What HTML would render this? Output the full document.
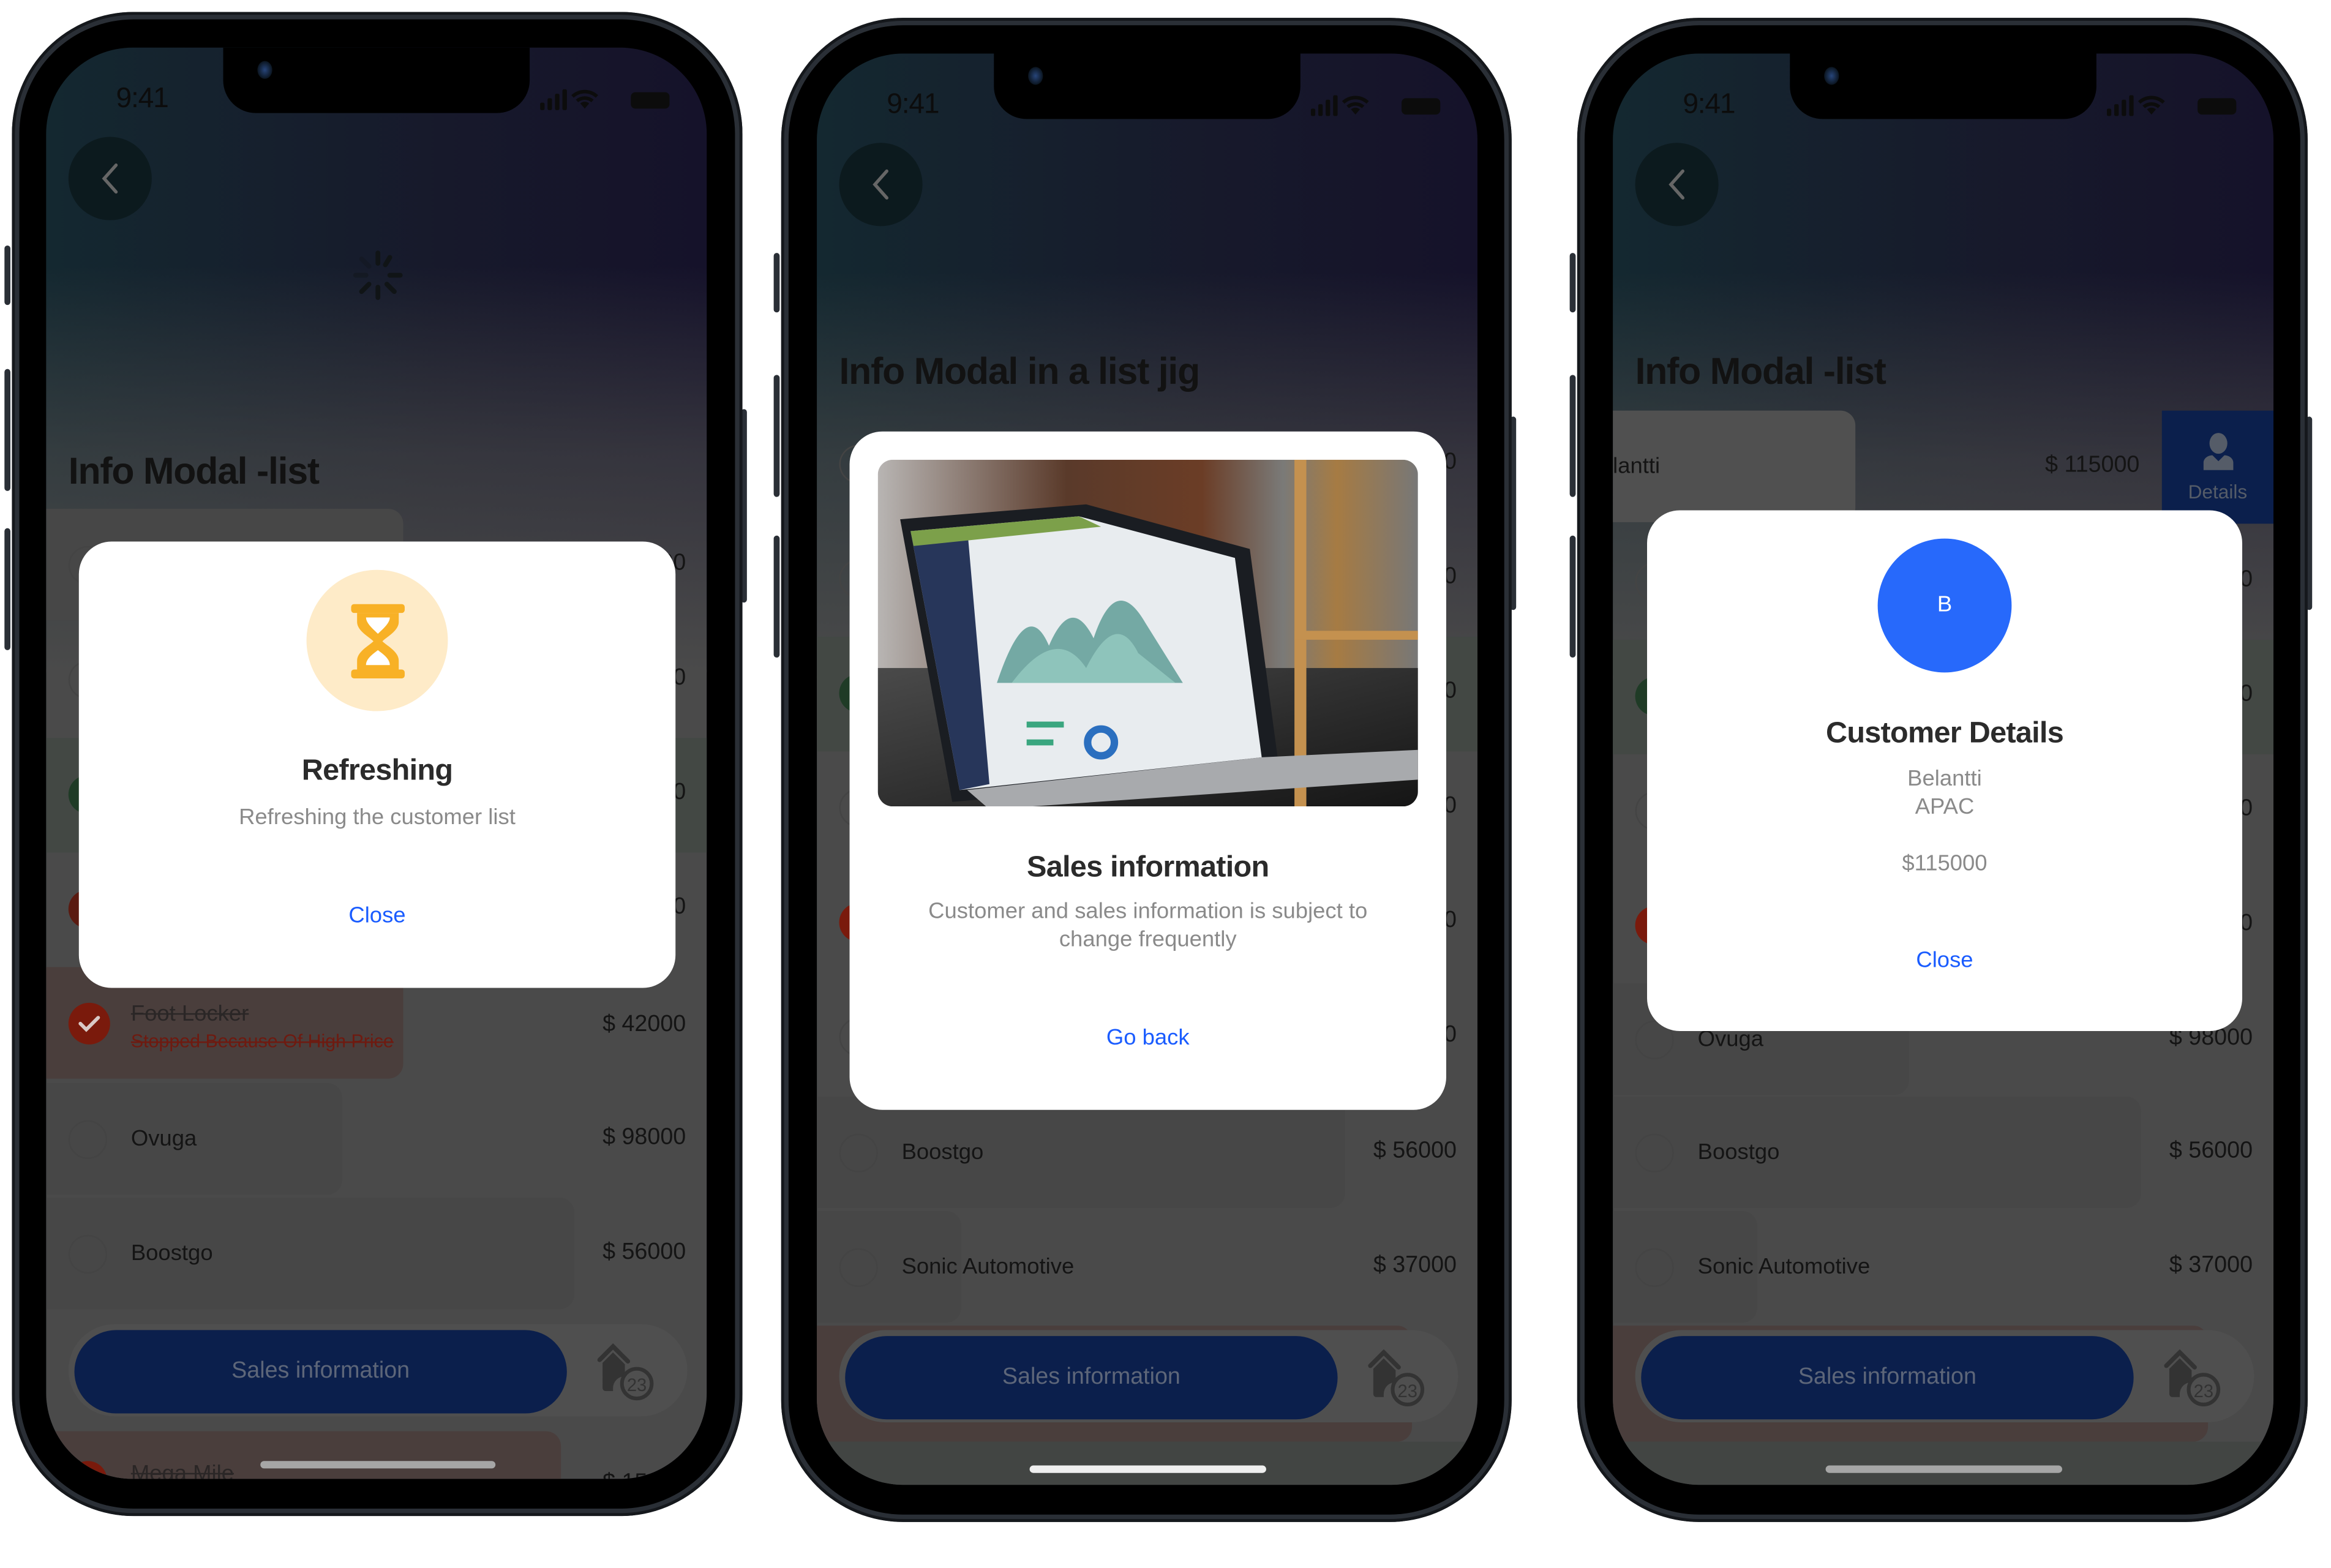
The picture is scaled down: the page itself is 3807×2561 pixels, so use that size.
<!DOCTYPE html>
<html><head><meta charset="utf-8">
<style>
html,body{margin:0;padding:0;background:#fff;overflow:hidden}
body{width:3807px;height:2561px;position:relative}
#w{position:absolute;left:0;top:0;width:1570px;height:1060px;transform:scale(2.43);transform-origin:0 0;font-family:"Liberation Sans",sans-serif}
.ph{position:absolute;width:491px;height:1011px;border-radius:82px;background:#2a2f36;box-shadow:inset 0 0 0 2px #15181c}
.bz{position:absolute;left:5px;top:5px;right:5px;bottom:5px;border-radius:77px;background:#000}
.btn{position:absolute;width:4px;background:#2a2f36;border-radius:2px}
.sc{position:absolute;left:24px;top:24px;width:444px;height:962px;border-radius:58px;overflow:hidden;
background:linear-gradient(90deg,#142830,#17192b 60%,#15122a);}
.grad{position:absolute;left:0;top:0;width:100%;height:420px;background:linear-gradient(180deg,rgba(74,74,74,0) 0,rgba(74,74,74,0) 35%,rgba(74,74,74,.6) 65%,#4a4a4a 100%)}
.bg{position:absolute;left:0;top:418px;width:100%;height:600px;background:#4a4a4a}
.notch{position:absolute;left:119px;top:0;width:206px;height:44px;background:#000;border-radius:0 0 22px 22px}
.cam{position:absolute;left:142px;top:9px;width:10px;height:12px;border-radius:50%;background:radial-gradient(#27457a,#0b1520 70%)}
.time{position:absolute;left:47px;top:24px;font-size:19px;color:#0c0c0c;letter-spacing:-.5px}
.back{position:absolute;left:15px;top:60px;width:56px;height:56px;border-radius:50%;background:#0c1a1e}
.title{position:absolute;left:15px;font-size:25px;font-weight:bold;color:#121212;letter-spacing:-.5px;white-space:nowrap}
.row{position:absolute;left:0;width:444px;height:77px}
.rb{position:absolute;top:0;height:75px;border-radius:0 10px 10px 0;background:#474747}
.cir{position:absolute;left:15px;width:26px;height:26px;border-radius:50%;border:1.5px solid #444;box-sizing:border-box}
.nm{position:absolute;left:57px;font-size:15px;color:#141414;white-space:nowrap}
.pr{position:absolute;right:14px;font-size:15.5px;color:#141414;white-space:nowrap}
.pill{position:absolute;left:15px;top:858px;width:416px;height:62px;border-radius:31px;background:#4f4f4f}
.sb{position:absolute;left:4px;top:4px;width:331px;height:56px;border-radius:28px;background:#0b1f4c;color:#5d6679;font-size:15.5px;text-align:center;line-height:56px}
.modal{position:absolute;background:#fff;border-radius:22px;text-align:center}
.mt{position:absolute;left:0;right:0;font-size:20px;font-weight:bold;color:#2b2b2b;letter-spacing:-.3px}
.ms{position:absolute;left:0;right:0;font-size:15px;color:#8a8a8a;line-height:19px}
.ml{position:absolute;left:0;right:0;font-size:15px;color:#1a5cff}
.hb{position:absolute;left:144px;top:946px;width:158px;height:5px;border-radius:3px}
</style></head><body><div id="w">

<!-- PHONE 1 -->
<div class="btn" style="left:3px;top:165px;height:40px"></div>
<div class="btn" style="left:3px;top:248px;height:82px"></div>
<div class="btn" style="left:3px;top:355px;height:82px"></div>
<div class="btn" style="left:498px;top:275px;height:130px"></div>
<div class="ph" style="left:8px;top:8px"><div class="bz"></div>
<div class="sc" style="left:23px;top:24px">
 <div class="grad"></div><div class="bg"></div>
 <div class="notch"></div><div class="cam"></div>
 <div class="time">9:41</div>
 <svg style="position:absolute;left:332px;top:27px" width="90" height="16" viewBox="0 0 90 16"><g fill="#0c0c0c"><rect x="0" y="10" width="3" height="5" rx="1"/><rect x="5" y="7" width="3" height="8" rx="1"/><rect x="10" y="4" width="3" height="11" rx="1"/><rect x="15" y="1" width="3" height="14" rx="1"/><path d="M30 14l3-3.5a4.5 4.5 0 0 0-6 0z M24 8a9 9 0 0 1 12 0l-1.6 1.7a6.7 6.7 0 0 0-8.8 0z M21 5a13 13 0 0 1 18 0l-1.6 1.7a10.8 10.8 0 0 0-14.8 0z"/><rect x="61" y="3" width="26" height="11" rx="3"/></g></svg>
 <div class="back"><svg width="56" height="56"><path d="M32 19l-8 9 8 9" stroke="#666" stroke-width="2.2" fill="none" stroke-linecap="round"/></svg></div>
 <svg style="position:absolute;left:206px;top:136px" width="34" height="34" viewBox="-17 -17 34 34"><g stroke="#101416" stroke-width="3.2" stroke-linecap="round"><line x1="0" y1="-15" x2="0" y2="-8"/><line x1="8" y1="-12" x2="5" y2="-7"/><line x1="15" y1="0" x2="8" y2="0"/><line x1="11" y1="11" x2="6" y2="6"/><line x1="0" y1="15" x2="0" y2="8"/><line x1="-11" y1="11" x2="-6" y2="6"/><line x1="-15" y1="0" x2="-8" y2="0" opacity=".4"/><line x1="-11" y1="-11" x2="-6" y2="-6" opacity=".3"/></g></svg>
 <div class="title" style="top:271px">Info Modal -list</div>
 <div class="row" style="top:310px"><div class="rb" style="width:240px"></div><div class="cir" style="top:25px"></div><div class="pr" style="top:28px">$ 115000</div></div>
 <div class="row" style="top:387px"><div class="cir" style="top:25px"></div><div class="pr" style="top:28px">$ 32000</div></div>
 <div class="row" style="top:464px;background:#434844"><div class="cir" style="top:25px;background:#1f3b26;border:none"></div><div class="pr" style="top:28px">$ 71000</div></div>
 <div class="row" style="top:541px"><div class="cir" style="top:25px;background:#5a1a10;border:none"></div><div class="pr" style="top:28px">$ 60000</div></div>
 <div class="row" style="top:618px"><div class="rb" style="width:240px;background:#4a3e3c"></div>
  <div class="cir" style="top:24px;width:28px;height:28px;background:#7a1a0c;border:none"><svg width="28" height="28"><path d="M8 14l4 4 8-8" stroke="#d9c9c6" stroke-width="2.4" fill="none" stroke-linecap="round"/></svg></div>
  <div class="nm" style="top:23px;color:#2a2626;text-decoration:line-through">Foot Locker</div>
  <div class="nm" style="top:43px;font-size:12.5px;color:#6e1a10;text-decoration:line-through">Stopped Because Of High Price</div>
  <div class="pr" style="top:30px">$ 42000</div></div>
 <div class="row" style="top:696px"><div class="rb" style="width:199px"></div><div class="cir" style="top:25px"></div><div class="nm" style="top:29px">Ovuga</div><div class="pr" style="top:28px">$ 98000</div></div>
 <div class="row" style="top:773px"><div class="rb" style="width:355px"></div><div class="cir" style="top:25px"></div><div class="nm" style="top:29px">Boostgo</div><div class="pr" style="top:28px">$ 56000</div></div>
 <div class="row" style="top:930px"><div class="rb" style="width:346px;background:#4a3e3c"></div><div class="cir" style="top:20px;background:#7a1a0c;border:none"></div><div class="nm" style="top:20px;color:#2a2626;text-decoration:line-through">Mega Mile</div><div class="pr" style="top:26px">$ 15400</div></div>
 <div class="pill"><div class="sb">Sales information</div>
  <svg style="position:absolute;left:355px;top:12px" width="42" height="42" viewBox="0 0 42 42"><path d="M2 12L11 3l10 10" stroke="#333" stroke-width="3" fill="none" stroke-linecap="round"/><path d="M4 14l7-7 8 8v8a8 8 0 0 0-8 8v2H6a2 2 0 0 1-2-2z" fill="#333"/><circle cx="27" cy="28" r="10" stroke="#333" stroke-width="2.5" fill="none"/><text x="27" y="33" font-size="12" fill="#333" text-anchor="middle" font-family="Liberation Sans">23</text></svg></div>
 <div class="hb" style="background:#a6a6a6;top:950px"></div>
 <div class="modal" style="left:22px;top:332px;width:401px;height:300px">
  <div style="position:absolute;left:153px;top:19px;width:95px;height:95px;border-radius:50%;background:#feebc8"></div>
  <svg style="position:absolute;left:182px;top:42px" width="38" height="50" viewBox="0 0 38 50"><g fill="#f8b126"><rect x="1" y="0" width="36" height="6" rx="2"/><rect x="1" y="44" width="36" height="6" rx="2"/><path d="M5 6h28v6c0 6-8 10-11 13 3 3 11 7 11 13v6H5v-6c0-6 8-10 11-13C13 22 5 18 5 12z"/></g><path d="M11 9h16c0 4-5 8-8 11-3-3-8-7-8-11zM19 31c-4 3-8 6-8 10h16c0-4-4-7-8-10z" fill="#fff"/></svg>
  <div class="mt" style="top:143px">Refreshing</div>
  <div class="ms" style="top:176px">Refreshing the customer list</div>
  <div class="ml" style="top:243px">Close</div>
 </div>
</div></div>

<!-- PHONE 2 -->
<div class="btn" style="left:520px;top:170px;height:40px"></div>
<div class="btn" style="left:520px;top:252px;height:82px"></div>
<div class="btn" style="left:520px;top:360px;height:82px"></div>
<div class="btn" style="left:1015px;top:280px;height:130px"></div>
<div class="ph" style="left:525px;top:12px"><div class="bz"></div>
<div class="sc">
 <div class="grad"></div><div class="bg"></div>
 <div class="notch"></div><div class="cam"></div>
 <div class="time">9:41</div>
 <svg style="position:absolute;left:332px;top:27px" width="90" height="16" viewBox="0 0 90 16"><g fill="#0c0c0c"><rect x="0" y="10" width="3" height="5" rx="1"/><rect x="5" y="7" width="3" height="8" rx="1"/><rect x="10" y="4" width="3" height="11" rx="1"/><rect x="15" y="1" width="3" height="14" rx="1"/><path d="M30 14l3-3.5a4.5 4.5 0 0 0-6 0z M24 8a9 9 0 0 1 12 0l-1.6 1.7a6.7 6.7 0 0 0-8.8 0z M21 5a13 13 0 0 1 18 0l-1.6 1.7a10.8 10.8 0 0 0-14.8 0z"/><rect x="61" y="3" width="26" height="11" rx="3"/></g></svg>
 <div class="back"><svg width="56" height="56"><path d="M32 19l-8 9 8 9" stroke="#666" stroke-width="2.2" fill="none" stroke-linecap="round"/></svg></div>
 <div class="title" style="top:200px">Info Modal in a list jig</div>
 <div class="row" style="top:238px"><div class="cir" style="top:25px"></div><div class="pr" style="top:28px">$ 115000</div></div>
 <div class="row" style="top:315px"><div class="cir" style="top:25px"></div><div class="pr" style="top:28px">$ 32000</div></div>
 <div class="row" style="top:392px;background:#434844"><div class="cir" style="top:25px;background:#1f3b26;border:none"></div><div class="pr" style="top:28px">$ 71000</div></div>
 <div class="row" style="top:469px"><div class="cir" style="top:25px"></div><div class="pr" style="top:28px">$ 60000</div></div>
 <div class="row" style="top:546px"><div class="cir" style="top:25px;background:#7a1a0c;border:none"></div><div class="pr" style="top:28px">$ 42000</div></div>
 <div class="row" style="top:623px"><div class="cir" style="top:25px"></div><div class="pr" style="top:28px">$ 98000</div></div>
 <div class="row" style="top:701px"><div class="rb" style="width:355px"></div><div class="cir" style="top:25px"></div><div class="nm" style="top:29px">Boostgo</div><div class="pr" style="top:28px">$ 56000</div></div>
 <div class="row" style="top:778px"><div class="rb" style="width:97px"></div><div class="cir" style="top:25px"></div><div class="nm" style="top:29px">Sonic Automotive</div><div class="pr" style="top:28px">$ 37000</div></div>
 <div class="row" style="top:855px"><div class="rb" style="width:400px;background:#4a3e3c;height:78px"></div></div>
 <div style="position:absolute;left:0;top:933px;width:444px;height:40px;background:#424543"></div>
 <div class="pill"><div class="sb">Sales information</div>
  <svg style="position:absolute;left:355px;top:12px" width="42" height="42" viewBox="0 0 42 42"><path d="M2 12L11 3l10 10" stroke="#333" stroke-width="3" fill="none" stroke-linecap="round"/><path d="M4 14l7-7 8 8v8a8 8 0 0 0-8 8v2H6a2 2 0 0 1-2-2z" fill="#333"/><circle cx="27" cy="28" r="10" stroke="#333" stroke-width="2.5" fill="none"/><text x="27" y="33" font-size="12" fill="#333" text-anchor="middle" font-family="Liberation Sans">23</text></svg></div>
 <div class="hb" style="background:#efefef;top:949px;left:143px;width:159px"></div>
 <div class="modal" style="left:22px;top:254px;width:401px;height:456px">
  <svg style="position:absolute;left:19px;top:19px;border-radius:10px" width="363" height="233" viewBox="0 0 363 233">
   <defs><linearGradient id="bgp" x1="0" x2="1"><stop offset="0" stop-color="#b8b5b3"/><stop offset=".35" stop-color="#5a3a2a"/><stop offset=".6" stop-color="#6b3d26"/><stop offset=".75" stop-color="#7a7a78"/><stop offset=".85" stop-color="#a67b43"/><stop offset="1" stop-color="#777"/></linearGradient>
   <linearGradient id="tb" y1="0" y2="1"><stop offset="0" stop-color="#4a4a4a"/><stop offset="1" stop-color="#151515"/></linearGradient></defs>
   <rect width="363" height="233" fill="url(#bgp)"/>
   <rect x="0" y="140" width="363" height="93" fill="url(#tb)"/>
   <rect x="280" y="0" width="8" height="233" fill="#c4914f"/><rect x="280" y="115" width="83" height="6" fill="#c4914f"/>
   <path d="M15 40 L140 30 L250 60 L270 210 L50 230 Z" fill="#1a1d22"/>
   <path d="M22 48 L135 38 L240 66 L258 200 L55 222 Z" fill="#e8ecef"/>
   <path d="M22 48 L60 45 L75 218 L55 222 Z" fill="#27365a"/>
   <path d="M22 48 L135 38 L150 45 L24 58 Z" fill="#7ca04a"/>
   <path d="M80 150 Q100 90 115 125 Q130 90 145 120 Q160 75 180 110 L205 150 Z" fill="#5f9e96" opacity=".85"/>
   <path d="M90 150 Q120 110 140 140 Q160 100 175 130 L200 150 Z" fill="#9ad0c4" opacity=".7"/>
   <circle cx="150" cy="190" r="9" fill="none" stroke="#2b6fbf" stroke-width="5"/>
   <rect x="100" y="176" width="25" height="4" fill="#3aa67f"/><rect x="100" y="188" width="18" height="4" fill="#3aa67f"/>
   <path d="M60 222 L258 200 L363 195 L363 215 L75 235 Z" fill="#a8aaad"/>
  </svg>
  <div class="mt" style="top:282px">Sales information</div>
  <div class="ms" style="top:313px;padding:0 30px">Customer and sales information is subject to change frequently</div>
  <div class="ml" style="top:399px">Go back</div>
 </div>
</div></div>

<!-- PHONE 3 -->
<div class="btn" style="left:1055px;top:170px;height:40px"></div>
<div class="btn" style="left:1055px;top:252px;height:82px"></div>
<div class="btn" style="left:1055px;top:360px;height:82px"></div>
<div class="btn" style="left:1550px;top:280px;height:130px"></div>
<div class="ph" style="left:1060px;top:12px"><div class="bz"></div>
<div class="sc">
 <div class="grad"></div><div class="bg"></div>
 <div class="notch"></div><div class="cam"></div>
 <div class="time">9:41</div>
 <svg style="position:absolute;left:332px;top:27px" width="90" height="16" viewBox="0 0 90 16"><g fill="#0c0c0c"><rect x="0" y="10" width="3" height="5" rx="1"/><rect x="5" y="7" width="3" height="8" rx="1"/><rect x="10" y="4" width="3" height="11" rx="1"/><rect x="15" y="1" width="3" height="14" rx="1"/><path d="M30 14l3-3.5a4.5 4.5 0 0 0-6 0z M24 8a9 9 0 0 1 12 0l-1.6 1.7a6.7 6.7 0 0 0-8.8 0z M21 5a13 13 0 0 1 18 0l-1.6 1.7a10.8 10.8 0 0 0-14.8 0z"/><rect x="61" y="3" width="26" height="11" rx="3"/></g></svg>
 <div class="back"><svg width="56" height="56"><path d="M32 19l-8 9 8 9" stroke="#666" stroke-width="2.2" fill="none" stroke-linecap="round"/></svg></div>
 <div class="title" style="top:200px">Info Modal -list</div>
 <div class="row" style="top:240px"><div class="rb" style="width:163px;background:#505050"></div><div class="nm" style="left:0;top:29px">lantti</div><div class="pr" style="top:28px;right:90px">$ 115000</div>
  <div style="position:absolute;left:369px;top:0;width:75px;height:76px;background:#0b1f4c;text-align:center">
   <svg style="margin-top:14px" width="24" height="26" viewBox="0 0 24 26"><g fill="#555c68"><ellipse cx="12" cy="8" rx="6" ry="7"/><path d="M2 26v-5c0-3 3-5 6-5l4 4 4-4c3 0 6 2 6 5v5z"/></g></svg>
   <div style="font-size:13px;color:#555c68;margin-top:2px">Details</div></div></div>
 <div class="row" style="top:317px"><div class="cir" style="top:25px"></div><div class="pr" style="top:28px">$ 32000</div></div>
 <div class="row" style="top:394px;background:#434844"><div class="cir" style="top:25px;background:#1f3b26;border:none"></div><div class="pr" style="top:28px">$ 71000</div></div>
 <div class="row" style="top:471px"><div class="cir" style="top:25px"></div><div class="pr" style="top:28px">$ 60000</div></div>
 <div class="row" style="top:548px"><div class="cir" style="top:25px;background:#7a1a0c;border:none"></div><div class="pr" style="top:28px">$ 42000</div></div>
 <div class="row" style="top:625px"><div class="rb" style="width:199px"></div><div class="cir" style="top:25px"></div><div class="nm" style="top:29px">Ovuga</div><div class="pr" style="top:28px">$ 98000</div></div>
 <div class="row" style="top:701px"><div class="rb" style="width:355px"></div><div class="cir" style="top:25px"></div><div class="nm" style="top:29px">Boostgo</div><div class="pr" style="top:28px">$ 56000</div></div>
 <div class="row" style="top:778px"><div class="rb" style="width:97px"></div><div class="cir" style="top:25px"></div><div class="nm" style="top:29px">Sonic Automotive</div><div class="pr" style="top:28px">$ 37000</div></div>
 <div class="row" style="top:855px"><div class="rb" style="width:400px;background:#4a3e3c;height:78px"></div></div>
 <div style="position:absolute;left:0;top:933px;width:444px;height:40px;background:#424543"></div>
 <div class="pill"><div class="sb">Sales information</div>
  <svg style="position:absolute;left:355px;top:12px" width="42" height="42" viewBox="0 0 42 42"><path d="M2 12L11 3l10 10" stroke="#333" stroke-width="3" fill="none" stroke-linecap="round"/><path d="M4 14l7-7 8 8v8a8 8 0 0 0-8 8v2H6a2 2 0 0 1-2-2z" fill="#333"/><circle cx="27" cy="28" r="10" stroke="#333" stroke-width="2.5" fill="none"/><text x="27" y="33" font-size="12" fill="#333" text-anchor="middle" font-family="Liberation Sans">23</text></svg></div>
 <div class="hb" style="background:#a6a6a6;top:949px;left:143px;width:159px"></div>
 <div class="modal" style="left:23px;top:307px;width:400px;height:350px">
  <div style="position:absolute;left:155px;top:19px;width:90px;height:90px;border-radius:50%;background:#2769fb;color:#fff;font-size:15px;line-height:90px">B</div>
  <div class="mt" style="top:139px">Customer Details</div>
  <div class="ms" style="top:171px">Belantti<br>APAC</div>
  <div class="ms" style="top:228px">$115000</div>
  <div class="ml" style="top:294px">Close</div>
 </div>
</div></div>

</div></body></html>
